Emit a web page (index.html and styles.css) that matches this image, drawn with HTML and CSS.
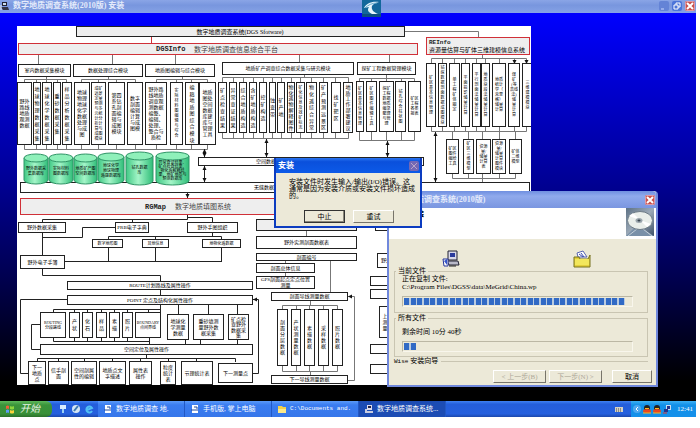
FILE: index.html
```html
<!DOCTYPE html>
<html lang="zh-CN">
<head>
<meta charset="utf-8">
<title>数字地质调查系统(2010版) 安装</title>
<link rel="stylesheet" href="styles.css">
</head>
<body>
<div class="screen">
  <header class="titlebar">
    <svg class="app-icon" viewBox="0 0 10 10"><rect x="2" y="1" width="5" height="4" fill="#223"/><rect x="3" y="2" width="3" height="2" fill="#cde"/><path d="M1 6h7l1 3H3z" fill="#334"/><path d="M1 4v5" stroke="#eee"/></svg>
    <h1 class="title">数字地质调查系统(2010版) 安装</h1>
    <button class="win-btn dim" aria-label="最小化"><svg viewBox="0 0 10 10"><path d="M2 8h3" stroke="#c8d6ff" stroke-width="1"/></svg></button>
    <button class="win-btn" aria-label="还原"><svg viewBox="0 0 10 10"><path d="M4 4V2h4v4H6M2 4h4v4H2z" fill="none" stroke="#fff"/></svg></button>
    <button class="win-btn close" aria-label="关闭"><svg viewBox="0 0 10 10"><path d="M2 2l6 6M8 2L2 8" stroke="#fff" stroke-width="2"/></svg></button>
    <svg class="logo" viewBox="0 0 19 17"><rect width="19" height="17" fill="#12679b"/><path d="M0 14h19v3H0z" fill="#0b4e80"/><path d="M17 2C9 1 4 4 2 8l5-1c-2 3-1 5 3 7h6c-5-2-7-5-6-8 1-2 3-3 7-4z" fill="#e6f4fb"/><path d="M3 8c3-3 7-5 12-5" stroke="#5ba4c8" fill="none"/></svg>
  </header>

  <main class="desktop">
    <svg class="chart" viewBox="17 26 514 359" role="img" aria-label="数字地质调查系统结构图"></svg>

    <section class="window wizard">
      <header class="wizard-title"><h2>数字地质调查系统(2010版)</h2>
        <button class="win-btn close" aria-label="关闭"><svg viewBox="0 0 10 10"><path d="M2 2l6 6M8 2L2 8" stroke="#fff" stroke-width="2"/></svg></button>
      </header>
      <div class="banner"><strong>正在安装</strong>
        <svg class="disc" viewBox="0 0 28 28"><defs><linearGradient id="dg" x2="1" y2="1"><stop stop-color="#5d7184"/><stop offset=".5" stop-color="#9caab8"/><stop offset="1" stop-color="#3c5068"/></linearGradient></defs><rect width="28" height="28" fill="url(#dg)"/><path d="M0 28l9-9 10 3 9 6z" fill="#7990a8"/><path d="M2 28l9-7M26 28l-9-7" stroke="#c3ced8"/><ellipse cx="14" cy="12.500" rx="12.500" ry="9" fill="#e9eeea" stroke="#6f7d88"/><path d="M14 12L3 8l4-3zM14 12l11 4-4 3z" fill="#fff"/><ellipse cx="13" cy="12.500" rx="3.500" ry="2.500" fill="#9ba6ad"/><ellipse cx="13" cy="12.500" rx="1.500" ry="1" fill="#39464f"/></svg>
      </div>
      <div class="wizard-body">
        <div class="copy-icons">
          <svg viewBox="0 0 18 18"><path d="M6 1h9v9H6z" fill="#d8d8e8" stroke="#223"/><path d="M8 3h5v4H8z" fill="#2a3a9c"/><path d="M5 11h11l1 4H7z" fill="#b9b9c8" stroke="#223"/><path d="M1 9h5v7H2z" fill="#fff" stroke="#24349a"/><path d="M2 11l3-2v6z" fill="#3454c8"/><path d="M7 16h7" stroke="#222"/></svg>
          <svg viewBox="0 0 18 18"><path d="M4 3l6-2 4 6H5z" fill="#fff" stroke="#5563b0"/><path d="M6 4l4 3M8 3l3 4" stroke="#3a4bb0"/><path d="M1 7h5l1 2h8l2-4v12H1z" fill="#e3cf3a" stroke="#77721e"/><path d="M2 9h14v6H2z" fill="#f2e75c"/></svg>
        </div>
        <fieldset class="group">
          <legend>当前文件</legend>
          <p>正在复制 文件:</p>
          <p class="path">C:\Program Files\DGSS\data\MeGrid\China.wp</p>
          <progress value="221" max="227" aria-label="当前文件"></progress>
        </fieldset>
        <fieldset class="group all">
          <legend>所有文件</legend>
          <p>剩余时间 10分 40秒</p>
          <progress value="12" max="227" aria-label="所有文件"></progress>
        </fieldset>
        <div class="brand"><span><span class="mono">Wise</span> 安装向导</span></div>
        <div class="actions">
          <button class="btn" disabled>&lt; 上一步(B)</button>
          <button class="btn" disabled>下一步(N) &gt;</button>
          <button class="btn cancel">取消</button>
        </div>
      </div>
    </section>

    <section class="window dialog" role="alertdialog" aria-labelledby="dlg">
      <header class="dialog-title"><h2 id="dlg">安装</h2>
        <button class="win-btn off" aria-label="关闭" disabled><svg viewBox="0 0 10 10"><path d="M2 2l6 6M8 2L2 8" stroke="#b9a5c8" stroke-width="1"/></svg></button>
      </header>
      <p class="message">安装文件时发生输入/输出(I/O)错误。这<br>通常是因为安装介质或安装文件损坏造成<br>的。</p>
      <div class="dialog-actions"><button class="btn default">中止</button><button class="btn">重试</button></div>
    </section>
  </main>

  <footer class="taskbar">
    <button class="start"><svg viewBox="0 0 10 10"><path d="M1 2q2-1 3 0v3q-1-1-3 0z" fill="#f0603a"/><path d="M5 2q2 1 4 0v3q-2 1-4 0z" fill="#8ed53c"/><path d="M1 6q2-1 3 0v3q-1-1-3 0z" fill="#5c9cf5"/><path d="M5 6q2 1 4 0v3q-2 1-4 0z" fill="#fbd33c"/></svg>开始</button>
    <div class="quick">
      <svg viewBox="0 0 10 10"><path d="M2 1h6v4H2z" fill="#d8ecff"/><path d="M4 5h2v4H4z" fill="#9cd0f4"/></svg>
      <svg viewBox="0 0 10 10"><circle cx="5" cy="5" r="4" fill="#d4e6f4"/><path d="M3 7l4-5" stroke="#3b78b0" stroke-width="2"/></svg>
      <svg viewBox="0 0 10 10"><path d="M8 7a3 3 0 1 1 0-3L3 6" fill="none" stroke="#52c0f4" stroke-width="2"/></svg>
    </div>
    <nav class="tasks">
      <button class="task"><svg viewBox="0 0 10 10"><path d="M2 1h6v8H2z" fill="#fff"/><path d="M1 6h5M4 3h3v4" stroke="#224a9c" fill="none"/></svg><span>数字地质调查 地.</span></button>
      <button class="task"><svg viewBox="0 0 10 10"><path d="M2 1h6v8H2z" fill="#fff"/><path d="M1 6h5M4 3h3v4" stroke="#224a9c" fill="none"/></svg><span>手机版, 掌上电脑</span></button>
      <button class="task"><svg viewBox="0 0 10 10"><path d="M1 2h4l1 1h3v6H1z" fill="#f4d048"/><path d="M1 5h8v4H1z" fill="#fbe98a"/></svg><span class="mono">C:\Documents and.</span></button>
      <button class="task active"><svg viewBox="0 0 10 10"><path d="M3 1h5v5H3z" fill="#dde"/><path d="M4 2h3v2H4z" fill="#224"/><path d="M3 7h6v2H3zM1 5h2v4H1z" fill="#c8cce0"/></svg><span>数字地质调查系统...</span></button>
    </nav>
    <svg class="lang" viewBox="0 0 10 10"><rect x="1" y="3" width="8" height="5" fill="#d6d2c4"/><path d="M2 5h6M2 7h6" stroke="#444" stroke-dasharray="1 1"/></svg>
    <div class="tray">
      <svg viewBox="0 0 10 10"><circle cx="5" cy="5" r="4" fill="#4ea8f0"/><path d="M6 3L4 5l2 2" stroke="#fff" fill="none"/></svg>
      <svg viewBox="0 0 10 10"><ellipse cx="5" cy="4" rx="3" ry="3" fill="#222"/><ellipse cx="5" cy="7" rx="4" ry="2" fill="#e84820"/><path d="M3 4h4v1H3z" fill="#f8b820"/><path d="M1 9h8" stroke="#f8b820"/></svg>
      <svg viewBox="0 0 10 10"><ellipse cx="5" cy="4" rx="3" ry="3" fill="#222"/><ellipse cx="5" cy="7" rx="4" ry="2" fill="#e84820"/><path d="M3 4h4v1H3z" fill="#f8b820"/><path d="M1 9h8" stroke="#f8b820"/></svg>
      <svg viewBox="0 0 10 10"><path d="M4 1h5v5H4z" fill="#cde"/><path d="M5 2h3v3H5zM2 5h4v3H2z" fill="#24348c"/><path d="M1 9h4" stroke="#d33"/></svg>
      <time>12:41</time>
    </div>
  </footer>
</div>
<script src="chart.js"></script>
</body>
</html>
```
FILE: styles.css
```css
* { box-sizing: border-box; }
body {
  margin: 0;
  background: #fff;
  color: #000;
  font-family: "Liberation Serif", "Noto Sans CJK SC", serif;
  font-size: 7px;
  line-height: 8px;
}
h1, h2, p { margin: 0; font-size: 8px; line-height: 10px; }
button { font: inherit; color: inherit; padding: 0; margin: 0; border: 0; }
svg { display: block; }

.screen {
  display: flex;
  flex-direction: column;
  min-height: 100vh;
  padding: 0 4px 11px 0;
}

/* main window title bar */
.titlebar {
  position: relative;
  display: flex;
  align-items: center;
  gap: 3px;
  height: 13px;
  padding: 0 1px 1px 0;
  background: linear-gradient(#8aa5e6, #7896de 40%, #86a2e6);
  color: #e4ebfb;
}
.app-icon { width: 10px; height: 10px; }
.title { flex: 1; font-weight: 700; }
.win-btn {
  width: 10px;
  height: 10px;
  border-radius: 2px;
  background: #4c74d8;
}
.win-btn svg { width: 100%; height: 100%; }
.win-btn.dim { background: #6483d6; }
.win-btn.close { background: #c8504c; box-shadow: inset 0 0 0 1px #dd9aa6; }
.win-btn.off { background: #7468b4; }
.logo {
  position: absolute;
  left: 52%;
  top: 0;
  width: 19px;
  height: 17px;
  z-index: 1;
}

.desktop {
  position: relative;
  flex: 1;
  padding: 13px 0 16px 17px;
  background: linear-gradient(#0000fe 0%, #0000e0 12%, #000098 42%, #000050 68%, #000014 88%, #000 95%);
}
.chart { width: 514px; background: #fff; }
.chart text {
  font-family: "Liberation Serif", "Noto Sans CJK SC", serif;
  text-anchor: middle;
  fill: #000;
}
.chart .f4 { font-size: 4px; }
.chart .f5 { font-size: 5px; }
.chart .f6 { font-size: 6px; }
.chart .f7 { font-size: 7px; fill: #444; }
.chart .left { text-anchor: start; }
.chart .mono { font-family: "Liberation Mono", monospace; font-weight: 700; fill: #222; }
.chart .box { fill: #fff; stroke: #222; }
.chart .shade { fill: #eee; }
.chart .red { fill: #eee; stroke: #d03038; }
.chart .wire { fill: none; stroke: #222; }
.chart .thin { stroke: #777; }
.chart .wire.crimson { stroke: #d03038; }
.chart .tip { fill: #111; }
.chart .can { fill: url(#green); stroke: #2f9466; }
.chart .lid { fill: #8ff0ba; stroke: #2f9466; }

/* windows on the desktop */
.window { position: absolute; display: flex; flex-direction: column; background: #ece9d8; }
.wizard {
  left: 387px;
  top: 178px;
  width: 271px;
  border: 2px solid #7088dc;
  border-top: 0;
  border-radius: 4px 4px 0 0;
}
.wizard-title, .dialog-title { display: flex; align-items: center; justify-content: space-between; }
.wizard-title {
  height: 17px;
  padding: 0 1px 0 3px;
  background: linear-gradient(#6f8fe0, #90aaec 30%, #7a96e0);
  color: #e4ebfb;
  border-radius: 4px 4px 0 0;
}
.banner { display: flex; justify-content: space-between; height: 31px; padding: 0 2px 0 7px; background: #fff; }
.banner strong { line-height: 13px; }
.disc { width: 28px; height: 28px; }
.wizard-body { display: flex; flex-direction: column; padding: 11px 8px 2px 5px; }
.copy-icons { display: flex; justify-content: space-between; height: 17px; padding: 0 57px 0 48px; }
.copy-icons svg { width: 18px; height: 18px; }
.group {
  min-width: 0;
  height: 46px;
  margin: 0;
  padding: 0 14px 0 7px;
  border: 1px solid #c9c5b2;
}
.group legend { padding: 0 2px; margin-left: -6px; line-height: 8px; }
.group p { font-size: 7px; line-height: 8px; }
.group progress { margin-top: 5px; }
.group.all { height: 43px; margin-top: 1px; }
.group.all p { line-height: 16px; padding-top: 2px; }
.group.all progress { margin-top: 1px; }
.brand { display: flex; align-items: center; gap: 3px; }
.brand::after { content: ""; flex: 1; height: 1px; background: #c9c5b2; }
progress {
  display: block;
  width: 100%;
  height: 11px;
  padding: 1px;
  appearance: none;
  border: 1px solid;
  border-color: #bbb7a4 #f8f6ec #f8f6ec #bbb7a4;
  background: #ece9d8;
}
progress::-webkit-progress-bar { background: #ece9d8; }
progress::-webkit-progress-value {
  background: linear-gradient(90deg, #316ac5 0 5px, #b9cbe0 5px 7px, #316ac5 7px 12px, #b9cbe0 12px) 0 0 / 13px 100%;
}
.actions { display: flex; justify-content: flex-end; gap: 3px; padding-top: 4px; margin-right: -4px; }
.btn {
  width: 53px;
  height: 13px;
  background: #ece9d8;
  border: 1px solid;
  border-color: #fff #77746a #77746a #fff;
  line-height: 10px;
}
.btn:disabled { color: #aca899; }
.btn.cancel { width: 40px; margin-left: 7px; }

.dialog { left: 274px; top: 145px; width: 148px; height: 70px; border: 2px solid #0c3cc0; border-top: 0; }
.dialog-title { height: 15px; padding: 0 1px 0 2px; margin: 0; background: linear-gradient(#2a74f0, #0a50dc 25%, #0c5ae8); color: #fff; }
.message { padding: 6px 0 0 13px; font-size: 7px; line-height: 7px; white-space: nowrap; }
.dialog-actions { display: flex; gap: 8px; padding: 10px 0 0 28px; }
.dialog-actions .btn { width: 41px; }
.btn.default { border-color: #333; box-shadow: inset -1px -1px #8a877a; }

/* taskbar */
.taskbar {
  display: flex;
  align-items: stretch;
  height: 16px;
  background: linear-gradient(#3f82f2, #245edb 20%, #2560de 80%, #1c48ac);
  color: #fff;
}
.taskbar svg { width: 10px; height: 10px; flex: none; }
.start {
  display: flex;
  align-items: center;
  gap: 5px;
  width: 52px;
  padding-left: 5px;
  border-radius: 0 6px 6px 0;
  background: linear-gradient(#5cb85a, #3a933a 25%, #389038 80%, #2b702b);
  color: #e8f4e4;
  font-size: 10px;
  font-style: italic;
}
.quick { display: flex; align-items: center; gap: 3px; width: 46px; padding-left: 6px; }
.tasks { display: flex; flex: 1; }
.task {
  display: flex;
  align-items: center;
  gap: 3px;
  flex: 0 1 87px;
  padding-left: 5px;
  background: linear-gradient(#5a9af8, #3a7cf0 25%, #3676ea);
  border-right: 1px solid #2258c4;
  white-space: nowrap;
  overflow: hidden;
}
.task.active { background: #1c4cb4; }
.mono { font-family: "Liberation Mono", monospace; font-size: 6px; }
.lang { align-self: center; margin-right: 7px; }
.tray { display: flex; align-items: center; width: 65px; padding-left: 1px; background: linear-gradient(#3cb0f4, #1290e8 25%, #1490ea); }
.tray time { margin-left: 5px; }
```
FILE: chart.js
```js
const NS = 'http://www.w3.org/2000/svg';
const chart = document.querySelector('.chart');

function add(tag, attrs, parent = chart) {
  const el = document.createElementNS(NS, tag);
  for (const k in attrs) el.setAttribute(k, attrs[k]);
  parent.appendChild(el);
  return el;
}

// Rows of text centred on (cx, cy)
function label(cx, cy, rows, size, pitch) {
  const t = add('text', { class: 'f' + size });
  const first = cy - (rows.length - 1) * pitch / 2 + size * 0.36;
  rows.forEach((row, i) => {
    add('tspan', { x: cx, y: first + i * pitch }, t).textContent = row;
  });
}

function box(x1, y1, x2, y2, text = '', size = 5, pitch = 6, cls = 'box') {
  add('rect', { class: cls, x: x1 + .5, y: y1 + .5, width: x2 - x1 - 1, height: y2 - y1 - 1 });
  if (text) label((x1 + x2) / 2, (y1 + y2) / 2, text.split('|'), size, pitch);
}

// Tall boxes in one row: [left, right, text]; text without "|" stands one character to a row
function columns(y1, y2, list, maxPitch = 7) {
  for (const [x1, x2, text, size = 5] of list) {
    const split = text.includes('|');
    const rows = split ? text.split('|') : [...text];
    const widest = size === 4 ? 5 : split ? 6 : maxPitch;
    const pitch = Math.min(widest, (y2 - y1 - 4) / rows.length);
    box(x1, y1, x2, y2, rows.join('|'), size, pitch);
  }
}

function wire(d, cls = '') { add('path', { class: 'wire ' + cls, d }); }

// Horizontal bar with a short stem at each x
function comb(y, stemEnd, xs, cls = 'thin') {
  wire(`M${xs[0]} ${y}H${xs[xs.length - 1]}` + xs.map(x => `M${x} ${y}V${stemEnd}`).join(''), cls);
}

function arrow(x, y1, y2, both = true) {
  wire(`M${x} ${y1}V${y2}`);
  add('path', { class: 'tip', d: `M${x - 2} ${y2 - 4}h4l-2 4z` });
  if (both) add('path', { class: 'tip', d: `M${x - 2} ${y1 + 4}h4l-2-4z` });
}

function text(x, y, s, cls) { add('text', { class: cls, x, y }).textContent = s; }

function cylinder(x1, x2, y1, y2, rows, pitch = 5) {
  const r = (x2 - x1) / 2;
  add('path', { class: 'can', d: `M${x1} ${y1 + 4}V${y2 - 4}A${r} 4 0 0 0 ${x2} ${y2 - 4}V${y1 + 4}z` });
  add('ellipse', { class: 'lid', cx: x1 + r, cy: y1 + 4, rx: r, ry: 4 });
  label(x1 + r, (y1 + y2) / 2 + 2, rows.split('|'), 4, pitch);
}

const defs = add('defs', {});
const g = add('linearGradient', { id: 'green' }, defs);
add('stop', { offset: 0, 'stop-color': '#3fc884' }, g);
add('stop', { offset: .45, 'stop-color': '#a4f5c8' }, g);
add('stop', { offset: 1, 'stop-color': '#2fbd78' }, g);

// Headings
wire('M405 31.500H478.500V37', 'thin');
box(76, 26, 405, 37, '', 6, 6, 'box shade');
text(240, 34, '数字地质调查系统(DGS Sfotware)', 'f6');
wire('M151.500 37V44', 'crimson');
box(18, 43, 418, 55, '', 6, 6, 'red');
text(156, 51, 'DGSInfo', 'f7 mono left');
text(194, 52, '数字地质调查信息综合平台', 'f7 left');
box(426, 37, 530, 55, '', 6, 6, 'red');
text(429, 44, 'REInfo', 'f6 mono left');
text(429, 52, '资源量估算与矿体三维建模信息系统', 'f6 left');

// Modules
wire('M38.500 55V64M112.500 55V64M175.500 55V64M299.500 55V62M389.500 55V62', 'thin');
box(18, 64, 71, 77, '室内数据采集模块');
box(73, 64, 143, 77, '数据处理综合模块');
box(145, 64, 215, 77, '地质图编辑与综合模块');
box(222, 62, 354, 75, '地质矿产调查综合数据采集与研究模块');
box(357, 62, 416, 75, '探矿工程数据管理模块');
wire('M46.500 77V79M108.500 77V79M182.500 77V79M304.500 75V78M386.500 75V78', 'thin');

comb(79.5, 82, [24.5, 36.5, 46.5, 57.5, 66.5]);
comb(79.5, 82, [81.5, 98.5, 116.5, 135.5]);
comb(79.5, 82, [156.5, 176.5, 191.5, 207.5]);
comb(149.5, 144, [24.5, 36.5, 46.5, 57.5, 66.5, 81.5, 98.5, 116.5, 135.5, 156.5, 176.5, 191.5, 207.5]);
columns(82, 145, [
  [17, 32, '野外|路线|地质|观测|数据'], [33, 41, '地球物理数据采集'], [42, 52, '地球化学数据采集'],
  [53, 61, '重砂数据采集'], [62, 72, '样品分析数据采集'],
  [74, 90, '地球|物理|地球|化学|数据|处理|与成|图'],
  [91, 106, '成矿|远景|定量|预测|与多|元统|计分|析计|算与|成图|模块', 4],
  [108, 125, '第四|系钻|孔剖|面编|辑与|成图|模块'], [127, 143, '数字|剖面|编辑|计算|与成|图模'],
  [145, 167, '野外路|线地质|调查观|测数据|编整、|编辑、|处理、|整合与|质检'],
  [170, 183, '实际材料图编辑与综合', 4], [185, 199, '编稿地质图综合模块'],
  [199, 216, '地质|图处|空间|数据|库建|库与|管理|工具'],
]);

comb(77.5, 82, [222.5, 233.5, 243.5, 253.5, 263.5, 272.5, 281.5, 291.5, 300.5, 311.5, 323.5, 335.5, 348.5]);
comb(138.5, 132, [222.5, 233.5, 243.5, 253.5, 263.5, 272.5, 281.5, 291.5, 300.5, 311.5, 323.5, 335.5, 348.5]);
columns(82, 133, [
  [218, 227, '矿点检查结果'], [229, 237, '异常查证结果'], [239, 247, '综合地质构造'], [249, 257, '含矿地质构造'],
  [259, 267, '控矿构造'], [269, 276, '蚀变带'], [277, 285, '矿产地'], [287, 295, '物化遥物解释图件'],
  [296, 305, '矿化信息及找矿标志', 4], [306, 317, '物化遥综合异常'], [319, 328, '矿产预测远景区'],
  [331, 341, '找矿靶区'], [343, 353, '地质工作部署建议'],
]);
comb(78.5, 82, [359.5, 371.5, 386.5, 401.5, 414.5]);
comb(140.5, 132, [359.5, 371.5, 386.5, 401.5, 414.5]);
columns(81, 132, [
  [356, 364, '矿区基本信息管理', 4], [366, 377, '矿区图件编辑工具', 4],
  [379, 394, '探矿|工程|数据|地质|编录|整理|与管|理', 4], [395, 406, '钻孔综合柱状图', 4], [408, 421, '矿区|工程|各类|报表', 4],
]);
wire('M482.500 55V59', 'thin');
comb(58.5, 64, [431.5, 442.5, 454.5, 465.5, 476.5, 485.5, 499.5, 514.5, 526.5]);
comb(131.5, 126, [431.5, 442.5, 454.5, 465.5, 476.5, 485.5, 499.5, 514.5, 526.5]);
add('path', { class: 'tip', d: 'M512.500 60h4l-2 4zM524.500 60h4l-2 4z' });
columns(63, 127, [
  [426, 436, '矿区基本信息管理', 4], [438, 447, '钻探数据剖面数据成图模块', 4], [449, 460, '单工程矿体圈定', 4],
  [461, 470, '平面投影储量计算', 4], [472, 481, '平行剖面法储量计算', 4], [481, 490, '地质块段法储量计算', 4],
  [492, 506, '地质|统计|学（|克里|格）|储量|计算', 4], [508, 520, '煤|矿|(等|高线|法)|储|量|计|算', 4], [522, 533, '三维建模模块', 4],
]);
comb(131.5, 139, [452.5, 468.5, 482.5, 499.5, 515.5]);
comb(178.5, 174, [452.5, 468.5, 482.5, 499.5, 515.5]);
wire('M482.500 178V182', 'thin');
columns(139, 174, [
  [446, 459, '矿区|图件|编绘|工具', 4], [463, 474, '矿区三维模型', 4], [476, 491, '资源|量/|储量|计算|表', 4],
  [492, 506, '资源|量/|储量|计算|图件|模块', 4], [509, 522, '矿体|二维|模型', 4],
]);

// Databases
box(198, 157, 424, 166);
text(256, 163, '空间数据库', 'f5 left');
box(20, 182, 530, 193);
text(254, 189, '无缝数据库', 'f5 left');
arrow(204.5, 149, 157);
arrow(204.5, 166, 182);
arrow(266.5, 139, 157);
arrow(387.5, 141, 157);
arrow(435.5, 132, 182);
arrow(187.5, 193, 198, false);
cylinder(24, 48, 154, 184, '野外数据采|集数据库');
cylinder(49, 73, 154, 184, '实际材料|图数据库');
cylinder(74, 97, 154, 184, '地质矿产图|空间数据库');
cylinder(98, 124, 153, 184, '地球化学|地球物理|遥感数据库');
cylinder(126, 153, 152, 185, '钻孔数据|库');
cylinder(156, 189, 152, 185, '异常查证结果、|矿点检查结果、|物化遥解释结|果、地矿地质与|预测数据库', 4);

// RGMap
box(20, 198, 400, 215, '', 6, 6, 'red');
text(145, 209, 'RGMap', 'f7 mono left');
text(175, 209, '数字地质填图系统', 'f7 left');
wire('M187.500 215V219.500M42.500 223V219.500H187.500M132.500 219V223M187.500 217.500H212.500V223');
wire('M115 227.500H82.500V237.500H42.500M42.500 233V255M212.500 233V236.500M108.500 261V236.500H221.500V261M155.500 236V261M64 261.500H222');
box(18, 222, 66, 233, '野外数据采集');
box(115, 222, 149, 233, 'PRB电子字典');
box(187, 222, 238, 233, '野外手图组织');
box(92, 239, 123, 248, '数字地形图', 4);
box(142, 239, 169, 248, '其他信息', 4);
box(202, 239, 241, 248, '地物化遥数据', 4);
box(20, 255, 65, 269, '野外电子手簿');
wire('M42.500 269V275.500H160.500V281M160.500 290V310M67 299.500H20.500V373.500H28');
comb(309.5, 312, [53.5, 74.5, 87.5, 101.5, 114.5, 127.5, 148.5, 160.5], '');
wire('M178.500 304V314M208.500 304V314M237.500 304V314M185.500 339V345M200.500 339V345M237.500 339V345M149.500 341V345');
box(67, 281, 253, 290, 'ROUTE计划路线及属性操作');
box(67, 295, 253, 305, 'POINT 定点及结构化属性操作');
comb(341.5, 337, [53.5, 74.5, 87.5, 101.5, 114.5, 127.5, 149.5], '');
columns(312, 338, [
  [40, 66, 'ROUTING|分段路线', 4], [69, 80, '产状'], [82, 93, '化石'], [96, 107, '样品'],
  [109, 120, '素描'], [122, 133, '照片'], [135, 161, 'BOUNDARY|点间界线', 4],
]);
columns(314, 340, [[167, 189, '地球化|学测量|数据'], [193, 224, '重砂填测|量野外数|据采集'], [228, 249, '矿点检|查野外|数据采|集']]);
wire('M40 324.500H31.500V349.500H40');
box(40, 344, 253, 355, '空间定位及属性操作');
wire('M146.500 355V358');
comb(358.5, 362, [37.5, 58.5, 84.5, 112.5, 140.5, 168.5, 196.5, 235.5], '');
columns(361, 385, [
  [28, 46, '下一|地质|点'], [48, 69, '信手剖|面'], [71, 97, '空间剖属|性的编辑'], [99, 126, '地质点文|字描述'],
  [129, 152, '属性表|操作'], [160, 176, '粒度|统计|表'],
]);
box(181, 361, 213, 385, '节理统计表');
box(218, 363, 253, 383, '下一测量点');
wire('M252 373.500H258.500V299.500H253');
add('path', { class: 'tip', d: 'M253 299.500l4-2v4z' });

// Section survey
box(256, 219, 357, 231, '', 5, 6, 'box shade');
wire('M306.500 231V236M285.500 260V276M330.500 260V292M310.500 301V305', 'thin');
box(256, 236, 357, 249, '野外实测剖面数据表');
box(256, 253, 357, 261, '剖面编号');
box(256, 263, 315, 273, '剖面总体信息');
box(256, 276, 315, 289, 'GPS剖面起点定点位置|测量');
box(271, 292, 348, 301, '剖面导线测量数据');
comb(305.5, 309, [282.5, 296.5, 309.5, 323.5, 337.5]);
comb(371.5, 366, [282.5, 296.5, 309.5, 323.5, 337.5]);
columns(309, 366, [[277, 288, '剖面分层数据'], [291, 301, '产状测量数据'], [304, 315, '素描数据'], [318, 329, '采样数据'], [332, 343, '照片数据']], 6);
wire('M310.500 371V375M348 380.500H354.500V296.500H348', 'thin');
add('path', { class: 'tip', d: 'M348 296.500l4-2v4z' });
box(271, 375, 348, 384, '下一导线测量数据');

// Boxes partly behind the wizard
box(375, 219, 420, 231);
box(377, 253, 395, 268, '野外');
for (const [y1, y2] of [[276, 286], [289, 299], [344, 354], [364, 374]]) box(370, y1, 420, y2);
box(379, 306, 391, 338, '上|测|量', 5, 6);
```
